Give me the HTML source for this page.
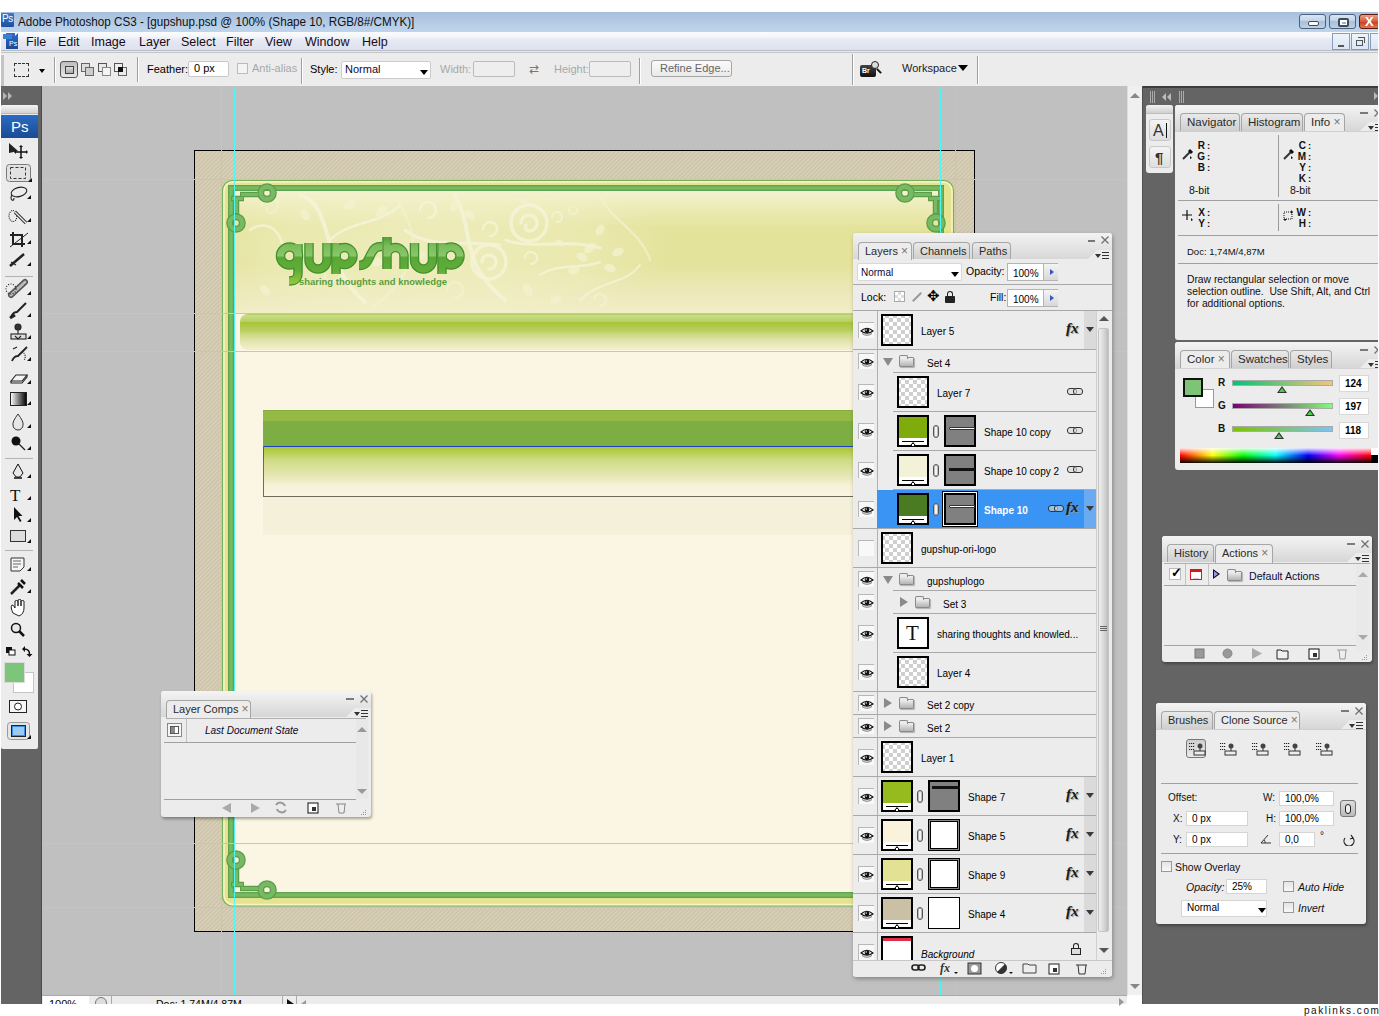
<!DOCTYPE html>
<html><head><meta charset="utf-8">
<style>
*{margin:0;padding:0;box-sizing:border-box}
html,body{width:1379px;height:1016px;overflow:hidden;background:#fff;font-family:"Liberation Sans",sans-serif;font-size:11px;color:#000}
.a{position:absolute}
#title{left:1px;top:12px;width:1378px;height:20px;background:linear-gradient(#a6bfdd,#b9cfe8 70%,#bfd4ec)}
#menu{left:1px;top:32px;width:1378px;height:18px;background:linear-gradient(#fbfcfe,#f6f7fb 22%,#e6e9f4 45%,#dde1ef)}
#menuline{left:1px;top:50px;width:1378px;height:3px;background:linear-gradient(#b9bcc8 0,#b9bcc8 1px,#e8e8ee 1px,#e8e8ee 2px,#c4c4c4 2px)}
#opts{left:1px;top:53px;width:1377px;height:33px;background:#ececec}
#work{left:0;top:86px;width:1127px;height:909px;background:#c0c0c0}
#tooldark{left:1px;top:86px;width:41px;height:918px;background:#646464}
#toolpanel{left:1px;top:105px;width:37px;height:643px;background:#ececec;border-radius:0 3px 3px 0}
#vscroll{left:1127px;top:86px;width:15px;height:909px;background:#f0f0f0}
#dock{left:1142px;top:86px;width:236px;height:918px;background:#646464;border-top:2px solid #3a3a3a;border-left:1px solid #4a4a4a}
#status{left:42px;top:995px;width:1085px;height:9px;background:#ececec}
.panel{position:absolute;background:#ececec;border-radius:3px}
#canvas{left:194px;top:150px;width:781px;height:782px;border:1px solid #000;background:#d0c7ae}
.wbtn{background:linear-gradient(#d9e5f3,#c3d4ea 45%,#a9bfdb 50%,#bcd0e8);border:1px solid #4e5f78;border-radius:3px}
.mi{top:3px;font-size:12.5px;line-height:15px;color:#1a0a14}
.mdi{top:1px;width:18px;height:17px;background:linear-gradient(#eef4fb,#d9e6f4);border:1px solid #8a9cb2}
.sep{position:absolute;width:2px;background:#a0a0a0;border-right:1px solid #fff}
.ob{position:absolute;font-size:11px;line-height:13px;white-space:nowrap}
.inp{position:absolute;background:#fff;border:1px solid #c8c8c8;border-radius:2px}
.eyeb{position:absolute;left:5px;width:16px;height:16px;background:#f8f8f8;border-top:1px solid #b8b8b8;border-left:1px solid #b8b8b8}
.thumb{position:absolute;width:32px;height:32px;border:2px solid #000;box-sizing:border-box}
.chk{background:conic-gradient(#cfcfcf 25%,#fff 0 50%,#cfcfcf 0 75%,#fff 0);background-size:8px 8px;background-position:2px 2px}
.chain{position:absolute;width:6px;height:13px;border:1.5px solid #555;border-radius:3px;background:#f4f4f4;box-shadow:inset 0 0 0 1px #bbb}
.link{position:absolute;width:15px;height:7px}.link::before,.link::after{content:"";position:absolute;top:0;width:8px;height:5px;border:1.5px solid #333;border-radius:3px;background:rgba(220,220,220,0.6)}.link::before{left:0}.link::after{left:6px}
.lname{position:absolute;font-size:10px;line-height:12px;white-space:nowrap}
.folder{position:absolute;width:15px;height:10px;margin-top:2px;background:linear-gradient(#f0f0f0,#b4b4b4);border:1px solid #8a8a8a;border-radius:0 1px 1px 1px;box-shadow:1px 1px 1px rgba(0,0,0,0.25)}.folder::before{content:"";position:absolute;left:-1px;top:-3px;width:7px;height:3px;background:#ececec;border:1px solid #8a8a8a;border-bottom:none;border-radius:2px 2px 0 0}
.fx{position:absolute;font-family:"Liberation Serif",serif;font-style:italic;font-weight:bold;font-size:15px;line-height:15px;text-shadow:1px 1px 1px #999}
.tab{position:absolute;height:17px;background:linear-gradient(#e9e9e9,#cfcfcf);border:1px solid #a5a5a5;border-bottom:none;border-radius:4px 4px 0 0;font-size:11px;line-height:16px;padding-left:6px;color:#2a2a2a;white-space:nowrap}
.tab.act{background:#ececec;height:18px}
.tx{color:#777;font-size:12px}
.ptx{position:absolute;font-size:12px;line-height:12px;color:#777}
.info{position:absolute;font-size:9.5px;line-height:11px;font-weight:bold;color:#111;white-space:nowrap}
.sl{width:101px;height:6px;border:1px solid #aaa}
.thm{position:absolute;width:0;height:0;border-left:5px solid transparent;border-right:5px solid transparent;border-bottom:7px solid #333}
.thm::after{content:"";position:absolute;left:-3px;top:2px;border-left:3px solid transparent;border-right:3px solid transparent;border-bottom:4px solid #4bd04b}
.inp2{position:absolute;width:30px;height:17px;background:#fff;border:1px solid #d8d8d8;font-size:10px;line-height:16px;padding-left:5px;font-weight:bold}
.inp3{position:absolute;height:15px;background:#fff;border:1px solid #d4d4d4;font-size:10px;line-height:14px;padding-left:5px;white-space:nowrap}
.cb{position:absolute;width:11px;height:11px;border:1px solid #999;background:linear-gradient(#e4e4e4,#f8f8f8)}
</style></head><body>
<div class="a" id="title">
<div class="a" style="left:0;top:1px;width:13px;height:14px;background:linear-gradient(#3a7bd0,#1c4f9e);border-radius:1px"></div>
<div class="a" style="left:1px;top:2px;color:#fff;font-size:10px;line-height:10px;letter-spacing:-0.5px">Ps</div>
<div class="a" style="left:17px;top:2px;font-size:13.5px;line-height:16px;color:#111;white-space:nowrap;transform:scaleX(0.864);transform-origin:0 0">Adobe Photoshop CS3 - [gupshup.psd @ 100% (Shape 10, RGB/8#/CMYK)]</div>
<div class="a wbtn" style="left:1298px;top:2px;width:27px;height:15px"><div class="a" style="left:8px;top:6px;width:11px;height:5px;background:#fff;border:1.5px solid #3f4a5a;border-radius:2px"></div></div>
<div class="a wbtn" style="left:1328px;top:2px;width:27px;height:15px"><div class="a" style="left:8px;top:3px;width:11px;height:9px;background:#fff;border:2px solid #3f4a5a;border-radius:2px"><div class="a" style="left:2px;top:2px;width:4px;height:2px;background:#9bb6d4"></div></div></div>
<div class="a" style="left:1358px;top:2px;width:22px;height:15px;background:linear-gradient(#e9a08a,#d45a3a 50%,#c8391b 51%,#dd7a52);border:1px solid #5a1a10;border-radius:3px;color:#fff;font-weight:bold;font-size:13px;line-height:13px;padding-left:5px">X</div>
</div>
<div class="a" id="menu">
<div class="a" style="left:2px;top:1px;width:17px;height:16px">
<div class="a" style="left:3px;top:0;width:12px;height:16px;background:linear-gradient(#2f6cc0,#1b4a94)"></div>
<div class="a" style="left:0;top:1px;width:9px;height:5px;background:#3b7fd6"></div>
<div class="a" style="left:12px;top:0;width:0;height:0;border-left:3px solid #fff;border-bottom:3px solid transparent"></div>
<div class="a" style="left:6px;top:7px;color:#fff;font-size:7px;line-height:7px">Ps</div>
</div>
<div class="a mi" style="left:25px">File</div>
<div class="a mi" style="left:57px">Edit</div>
<div class="a mi" style="left:90px">Image</div>
<div class="a mi" style="left:138px">Layer</div>
<div class="a mi" style="left:180px">Select</div>
<div class="a mi" style="left:225px">Filter</div>
<div class="a mi" style="left:264px">View</div>
<div class="a mi" style="left:304px">Window</div>
<div class="a mi" style="left:361px">Help</div>
<div class="a mdi" style="left:1331px"><div class="a" style="left:5px;top:11px;width:6px;height:2px;background:#555"></div></div>
<div class="a mdi" style="left:1350px"><div class="a" style="left:4px;top:6px;width:7px;height:6px;border:1.5px solid #555"></div><div class="a" style="left:6px;top:3px;width:7px;height:6px;border-top:1.5px solid #555;border-right:1.5px solid #555"></div></div>
<div class="a mdi" style="left:1369px"></div>
</div>

<div class="a" id="menuline"></div>
<div class="a" id="opts">
<div class="a" style="left:0;top:2px;width:3px;height:31px;background:#c4c4c4"></div>
<div class="a" style="left:13px;top:10px;width:15px;height:14px;border:1.5px dashed #333"></div>
<div class="a" style="left:38px;top:16px;border-left:3px solid transparent;border-right:3px solid transparent;border-top:4px solid #000"></div>
<div class="sep" style="left:53px;top:4px;height:26px"></div>
<div class="a" style="left:59px;top:8px;width:18px;height:17px;border:1px solid #555;border-radius:3px;background:linear-gradient(#bdbdbd,#e8e8e8)"><div class="a" style="left:4px;top:4px;width:9px;height:8px;border:1px solid #444;background:linear-gradient(#ddd,#aaa)"></div></div>
<div class="a" style="left:80px;top:10px;width:9px;height:9px;border:1px solid #666;background:#ddd"></div><div class="a" style="left:84px;top:14px;width:9px;height:9px;border:1px solid #666;background:#ccc"></div>
<div class="a" style="left:97px;top:10px;width:9px;height:9px;border:1px solid #555;background:#e8e8e8"></div><div class="a" style="left:101px;top:14px;width:9px;height:9px;border:1px solid #888;background:#f4f4f4"></div>
<div class="a" style="left:113px;top:10px;width:9px;height:9px;border:1px solid #555;background:#eee"></div><div class="a" style="left:117px;top:14px;width:9px;height:9px;border:1px solid #666;background:transparent"></div><div class="a" style="left:117px;top:14px;width:5px;height:5px;background:#111"></div>
<div class="sep" style="left:136px;top:4px;height:25px"></div>
<div class="ob" style="left:146px;top:9.5px">Feather:</div>
<div class="inp" style="left:187px;top:8px;width:41px;height:16px"><div class="ob" style="left:5px;top:0px">0 px</div></div>
<div class="a" style="left:236px;top:10px;width:11px;height:11px;border:1px solid #bbb;background:#f4f4f4"></div>
<div class="ob" style="left:251px;top:9px;color:#a8a8a8">Anti-alias</div>
<div class="sep" style="left:300px;top:5px;height:26px"></div>
<div class="ob" style="left:309px;top:9.5px">Style:</div>
<div class="inp" style="left:340px;top:8px;width:90px;height:18px;border-color:#ccc"><div class="ob" style="left:3px;top:1px;color:#0a0a3a">Normal</div><div class="a" style="left:78px;top:8px;border-left:4px solid transparent;border-right:4px solid transparent;border-top:5px solid #000"></div></div>
<div class="ob" style="left:439px;top:9.5px;color:#a8a8a8">Width:</div>
<div class="inp" style="left:472px;top:8px;width:42px;height:16px;background:#eee;border-color:#bbb"></div>
<div class="a" style="left:528px;top:10px;font-size:12px;color:#777;line-height:12px">&#8644;</div>
<div class="ob" style="left:553px;top:9.5px;color:#a8a8a8">Height:</div>
<div class="inp" style="left:588px;top:8px;width:42px;height:16px;background:#eee;border-color:#bbb"></div>
<div class="sep" style="left:638px;top:5px;height:26px"></div>
<div class="a" style="left:650px;top:7px;width:81px;height:17px;border:1px solid #a5a5a5;border-radius:3px;background:linear-gradient(#fafafa,#eaeaea)"><div class="ob" style="left:8px;top:1px;color:#666">Refine Edge...</div></div>
<div class="sep" style="left:851px;top:1px;height:31px"></div>
<div class="a" style="left:859px;top:12px;width:16px;height:12px;background:linear-gradient(#444,#111);border-radius:2px"><div class="a" style="left:2px;top:2px;color:#fff;font-size:7px;font-weight:bold;line-height:7px">Br</div></div>
<div class="a" style="left:870px;top:8px;width:8px;height:8px;border:1.5px solid #222;border-radius:50%;background:#ddd"></div>
<div class="a" style="left:877px;top:15px;width:2px;height:6px;background:#111;transform:rotate(-45deg)"></div>
<div class="ob" style="left:901px;top:9px;font-size:11px;color:#1a1a2a">Workspace</div>
<div class="a" style="left:957px;top:12px;border-left:5px solid transparent;border-right:5px solid transparent;border-top:6px solid #000"></div>
<div class="sep" style="left:976px;top:3px;height:28px"></div>
</div>
<div class="a" id="work"></div>
<svg class="a" style="left:194px;top:150px" width="782" height="783" viewBox="194 150 782 783">
<defs>
<pattern id="hatch" patternUnits="userSpaceOnUse" width="3" height="3" patternTransform="rotate(45)">
<rect width="3" height="3" fill="#cec5ab"/><rect width="1" height="3" fill="#dad2bd"/></pattern>
<clipPath id="hclip"><rect x="234" y="191" width="707" height="122"/></clipPath>
<linearGradient id="hdr" x1="0" y1="0" x2="0" y2="1">
<stop offset="0" stop-color="#f4f2d2"/><stop offset="0.1" stop-color="#eeedbc"/><stop offset="0.3" stop-color="#e4e39c"/><stop offset="0.6" stop-color="#e4e39c"/><stop offset="0.85" stop-color="#ede9bb"/><stop offset="1" stop-color="#f2edc6"/></linearGradient>
<radialGradient id="swl" cx="0.5" cy="0.5" r="0.5"><stop offset="0" stop-color="#f5f3d2" stop-opacity="0.6"/><stop offset="0.7" stop-color="#f3f1cc" stop-opacity="0.35"/><stop offset="1" stop-color="#f3f1cc" stop-opacity="0"/></radialGradient>
<linearGradient id="nav" x1="0" y1="0" x2="0" y2="1">
<stop offset="0" stop-color="#a5c55a"/><stop offset="0.04" stop-color="#cadd85"/><stop offset="0.21" stop-color="#b9cf66"/><stop offset="0.23" stop-color="#a7c636"/><stop offset="0.45" stop-color="#b8cd5e"/><stop offset="0.58" stop-color="#cedb86"/><stop offset="0.72" stop-color="#dfe3a6"/><stop offset="0.86" stop-color="#ebe9bd"/><stop offset="1" stop-color="#f5efcc"/></linearGradient>
<linearGradient id="cbox" x1="0" y1="0" x2="0" y2="1">
<stop offset="0" stop-color="#a8c632"/><stop offset="0.27" stop-color="#cfdc85"/><stop offset="0.57" stop-color="#e5e6b0"/><stop offset="0.78" stop-color="#f6f1d8"/><stop offset="1" stop-color="#fbf5e3"/></linearGradient>
<linearGradient id="logo" gradientUnits="userSpaceOnUse" x1="0" y1="237" x2="0" y2="282">
<stop offset="0" stop-color="#4f9f34"/><stop offset="0.2" stop-color="#7bbd5a"/><stop offset="0.42" stop-color="#8ac66a"/><stop offset="0.45" stop-color="#5aa737"/><stop offset="0.75" stop-color="#62ad38"/><stop offset="1" stop-color="#8ec53c"/></linearGradient>
</defs>
<rect x="194.5" y="150.5" width="780" height="781" fill="url(#hatch)" stroke="#000" stroke-width="1"/>
<rect x="222.5" y="180.5" width="731" height="725.5" rx="10" fill="#e4e38f" stroke="#74b35c" stroke-width="1.2"/>
<rect x="224" y="182" width="728" height="722.5" rx="9" fill="none" stroke="#f7f3c4" stroke-width="1.5"/>
<rect x="231" y="188" width="710" height="707" fill="#fbf5e3"/>
<rect x="234" y="191" width="707" height="122" fill="url(#hdr)"/>
<g clip-path="url(#hclip)"><ellipse cx="430" cy="250" rx="240" ry="90" fill="url(#swl)"/>
<g fill="none" stroke="#f5f3d6" stroke-opacity="0.85" stroke-width="3.5" stroke-linecap="round">
<circle cx="529" cy="223" r="18"/><path d="M529,223 m-8,0 a8,8 0 1 1 8,8 a4,4 0 0 1 -3,-6"/>
<circle cx="489" cy="262" r="17"/><path d="M489,262 m-7,0 a7,7 0 1 1 7,7"/>
<path d="M557,217 m-5,0 a5,5 0 1 1 5,5" stroke-width="2"/>
<path d="M490,229 m-7,0 a7,7 0 1 1 7,7" stroke-width="2.5"/>
<path d="M531,258 m-6,0 a6,6 0 1 1 6,6" stroke-width="2"/>
<path d="M428,210 m-8,0 a8,8 0 1 1 8,8" stroke-width="2.5"/>
<path d="M300,195 C335,205 318,262 365,302" stroke-width="4"/>
<path d="M455,195 C475,230 458,262 505,300" stroke-width="4"/>
<path d="M506,240 C530,250 570,238 600,248" stroke-width="3"/>
<path d="M405,230 C430,250 470,240 500,245" stroke-width="3"/>
<path d="M540,275 C560,262 580,270 600,262" stroke-width="2.5"/>
<path d="M330,240 C350,220 380,225 400,205" stroke-width="2.5"/>
<path d="M250,230 C270,215 290,240 280,260" stroke-width="2.5"/>
<path d="M580,300 C600,280 625,285 640,265" stroke-width="2"/>
</g>
<g fill="#f3f1cf" fill-opacity="0.75">
<ellipse cx="590" cy="248" rx="7" ry="4" transform="rotate(-40 590 248)"/><ellipse cx="582" cy="257" rx="6" ry="4" transform="rotate(30 582 257)"/>
<ellipse cx="574" cy="270" rx="6" ry="4" transform="rotate(-20 574 270)"/><ellipse cx="528" cy="290" rx="7" ry="4" transform="rotate(60 528 290)"/>
<ellipse cx="522" cy="200" rx="5" ry="3" transform="rotate(30 522 200)"/><ellipse cx="350" cy="205" rx="7" ry="4" transform="rotate(-30 350 205)"/>
<ellipse cx="382" cy="212" rx="7" ry="5" transform="rotate(-50 382 212)"/><ellipse cx="420" cy="255" rx="6" ry="4"/>
<ellipse cx="265" cy="290" rx="6" ry="4" transform="rotate(40 265 290)"/><ellipse cx="556" cy="300" rx="6" ry="4" transform="rotate(-30 556 300)"/>
<ellipse cx="610" cy="268" rx="6" ry="4" transform="rotate(20 610 268)"/><ellipse cx="305" cy="215" rx="6" ry="4" transform="rotate(60 305 215)"/>
<ellipse cx="455" cy="205" rx="7" ry="4" transform="rotate(-60 455 205)"/><ellipse cx="470" cy="215" rx="6" ry="4" transform="rotate(40 470 215)"/>
<ellipse cx="378" cy="262" rx="6" ry="4" transform="rotate(-30 378 262)"/><ellipse cx="600" cy="230" rx="6" ry="4" transform="rotate(-60 600 230)"/>
<ellipse cx="560" cy="243" rx="5" ry="3" transform="rotate(30 560 243)"/><ellipse cx="618" cy="252" rx="6" ry="4" transform="rotate(-30 618 252)"/>
</g>
<g fill="none" stroke="#f3f1cf" stroke-opacity="0.7" stroke-width="2.5" stroke-linecap="round">
<path d="M270,205 m-8,0 a8,8 0 1 1 8,8 a4,4 0 0 1 -3,-6"/>
<path d="M330,270 m-12,0 a12,12 0 1 1 12,12 a6,6 0 0 1 -5,-8"/>
<path d="M395,190 C400,210 420,230 410,260 C400,290 380,300 370,310"/>
<path d="M600,195 C610,220 640,230 650,260"/>
<path d="M455,290 m-8,0 a8,8 0 1 1 8,8"/>
<path d="M600,300 m-6,0 a6,6 0 1 1 6,6"/>
<circle cx="573" cy="210" r="4"/>
</g></g>
<rect x="240" y="314" width="701" height="36" rx="8" fill="url(#nav)"/>
<rect x="231" y="188" width="710" height="707" fill="none" stroke="#5fa34b" stroke-width="6"/><rect x="231" y="188" width="710" height="707" fill="none" stroke="#78b963" stroke-width="3.5"/>
<g id="ornd" fill="none" stroke="#5a9e47">
<circle cx="267" cy="193" r="6.3" stroke-width="7"/><circle cx="236" cy="223" r="6.3" stroke-width="7"/>
<path d="M240,194.5 H259 M231,198.5 H244 M236.5,198.5 V214" stroke-width="5.5"/>
</g>
<g id="orni" fill="none" stroke="#79b964">
<circle cx="267" cy="193" r="6.3" stroke-width="4.5"/><circle cx="236" cy="223" r="6.3" stroke-width="4.5"/>
<path d="M241,194.5 H258 M232,198.5 H243 M236.5,199.5 V213" stroke-width="3"/>
</g>
<use href="#ornd" transform="translate(1172,0) scale(-1,1)"/><use href="#orni" transform="translate(1172,0) scale(-1,1)"/>
<use href="#ornd" transform="translate(0,1083) scale(1,-1)"/><use href="#orni" transform="translate(0,1083) scale(1,-1)"/>
<use href="#ornd" transform="translate(1172,1083) scale(-1,-1)"/><use href="#orni" transform="translate(1172,1083) scale(-1,-1)"/>
<rect x="263" y="410" width="700" height="37" fill="#7dae44"/>
<rect x="263" y="410" width="700" height="11" fill="#94ba44"/><rect x="263" y="410" width="700" height="1" fill="#86ad40"/>
<rect x="263" y="447" width="700" height="49" fill="url(#cbox)"/>
<rect x="263" y="496" width="700" height="1" fill="#6e6c5c"/><rect x="263" y="446" width="1" height="51" fill="#6e6c5c"/>
<rect x="263" y="446" width="700" height="1" fill="#1c40c0"/><rect x="263" y="446" width="1" height="15" fill="#3c5ae0"/>
<rect x="263" y="497" width="700" height="38" fill="#f4f0da"/>
<g id="lgp" fill="none">
<circle cx="289.5" cy="256" r="9"/>
<path d="M298,244 V273 Q298,281 289,281"/>
<path d="M309,243 V260 A9,9 0 0 0 327,260 V243"/>
<path d="M336,243 V274"/>
<circle cx="344.5" cy="256" r="8.5"/>
<path d="M359,265.5 C367,265.5 368,260 371,254 C374,248 376,246.5 382,246.5"/>
<path d="M387,237 V269 M387,256 A8.5,8.5 0 0 1 404,256 V269"/>
<path d="M414.5,243 V260 A9,9 0 0 0 432.5,260 V243"/>
<path d="M442,243 V274"/>
<circle cx="451" cy="256" r="9"/>
</g>
<use href="#lgp" stroke="#3f8f2c" stroke-width="9.5"/>
<use href="#lgp" stroke="url(#logo)" stroke-width="7"/>
<text x="299" y="285" font-family="Liberation Sans" font-weight="bold" font-size="9.8" textLength="148" lengthAdjust="spacingAndGlyphs" fill="#5a9e3b">sharing thoughts and knowledge</text>
</svg>

<!--GUIDES--><div class="a" style="left:42px;top:179px;width:1085px;height:1px;background:#4ef6f6"></div>
<div class="a" style="left:42px;top:313px;width:1085px;height:1px;background:#4ef6f6"></div>
<div class="a" style="left:42px;top:351px;width:1085px;height:1px;background:#4ef6f6"></div>
<div class="a" style="left:42px;top:843px;width:1085px;height:1px;background:#4ef6f6"></div>
<div class="a" style="left:42px;top:907px;width:1085px;height:1px;background:#4ef6f6"></div>
<div class="a" style="left:221px;top:87px;width:1px;height:908px;background:#4ef6f6"></div>
<div class="a" style="left:234px;top:87px;width:1px;height:908px;background:#4ef6f6"></div>
<div class="a" style="left:940px;top:87px;width:1px;height:908px;background:#4ef6f6"></div>
<div class="a" style="left:955px;top:87px;width:1px;height:908px;background:#4ef6f6"></div><!--/GUIDES-->
<svg class="a" style="left:0;top:86px" width="42" height="918" viewBox="0 86 42 918" font-family="Liberation Sans">
<defs><linearGradient id="tbh" x1="0" y1="0" x2="0" y2="1"><stop offset="0" stop-color="#f4f4f4"/><stop offset="1" stop-color="#cfcfcf"/></linearGradient>
<linearGradient id="psb" x1="0" y1="0" x2="0" y2="1"><stop offset="0" stop-color="#2a6cc4"/><stop offset="1" stop-color="#1a4a94"/></linearGradient>
<linearGradient id="grd" x1="0" y1="0" x2="1" y2="0"><stop offset="0" stop-color="#fff"/><stop offset="1" stop-color="#000"/></linearGradient></defs>
<rect x="1" y="86" width="41" height="918" fill="#646464"/>
<rect x="41" y="86" width="1" height="918" fill="#4a4a4a"/>
<path d="M3,92 l4,4 l-4,4z M8,92 l4,4 l-4,4z" fill="#b5b5b5"/>
<rect x="1" y="105" width="37" height="644" rx="2" fill="#ececec"/>
<rect x="1" y="105" width="37" height="9" rx="2" fill="url(#tbh)"/>
<rect x="1" y="113" width="37" height="1" fill="#b8b8b8"/>
<rect x="1" y="115" width="37" height="23" fill="url(#psb)"/>
<text x="11" y="132" fill="#fff" font-size="15" font-weight="normal">Ps</text>
<g fill="#111" stroke="none">
<path d="M9,143 L9,153 L18,151 Z" fill="#222"/>
<path d="M21,147 v10 M16,152 h10" stroke="#111" stroke-width="1.5"/><path d="M19,147 l2,-2 l2,2z M19,157 l2,2 l2,-2z M16,150 l-2,2 l2,2z M26,150 l2,2 l-2,2z"/>
</g>
<rect x="6.5" y="164.5" width="24" height="17" rx="3" fill="#e2e2e2" stroke="#7a7a7a"/>
<rect x="10.5" y="167.5" width="15" height="11" fill="none" stroke="#333" stroke-dasharray="3,2"/>
<g fill="none" stroke="#222" stroke-width="1.1">
<ellipse cx="19" cy="192" rx="8" ry="4.5" transform="rotate(-15 19 192)"/><path d="M12,195 q-2,3 0,5 q2,1 2,-2"/>
<ellipse cx="13" cy="216" rx="4" ry="5.5" stroke-dasharray="1,1"/><path d="M15,212 l11,11" stroke="#333" stroke-width="3.2"/><path d="M15,212 l11,11" stroke="#eee" stroke-width="1.2"/>
<path d="M13,232 v12 h12 M10,235 h12 v12" stroke-width="2"/><path d="M10,247 l18,-14" stroke-width="1"/>
<path d="M10,266 l14,-12" stroke-width="2.5"/><path d="M11,262 l5,3" />
<line x1="5" y1="276.5" x2="33" y2="276.5" stroke="#b4b4b4"/>
<path d="M11,295 l14,-13" stroke="#555" stroke-width="6" stroke-linecap="round"/><path d="M11,295 l14,-13" stroke="#bbb" stroke-width="3" stroke-dasharray="1,2" stroke-linecap="round"/>
<circle cx="11" cy="289" r="5" stroke-dasharray="1,1.5"/>
<path d="M11,317 q2,-5 6,-5 l9,-9" stroke-width="2"/><path d="M10,318 l5,-3" stroke-width="3"/>
<circle cx="18" cy="327" r="3" fill="#333"/><path d="M18,330 v4"/><rect x="11" y="334" width="15" height="5" fill="#ddd"/><path d="M15,336 l3,3 l3,-3"/>
<path d="M12,361 q2,-5 6,-5 l9,-9" stroke-width="1.8"/><path d="M13,349 l4,-2" /><path d="M22,352 a5,5 0 0 1 2,8" stroke-dasharray="1,1"/>
<path d="M11,381 l5,-6 h11 l-5,6 z" fill="#f4f4f4"/><path d="M11,381 v2 h11 l5,-6 v-2"/>
</g>
<rect x="10.5" y="392.5" width="16" height="13" fill="url(#grd)" stroke="#222"/>
<path d="M18,414 q-6,8 -5,11 a5,5 0 0 0 10,0 q1,-3 -5,-11z" fill="#e6e6e6" stroke="#333"/>
<circle cx="16" cy="441" r="4.5" fill="#111"/><path d="M19,444 l6,6" stroke="#222" stroke-width="1.3"/>
<line x1="5" y1="458.5" x2="33" y2="458.5" stroke="#b4b4b4"/>
<path d="M18,464 l-5,9 l3,4 h4 l3,-4 z" fill="#e8e8e8" stroke="#111"/><path d="M14,478 h8" stroke="#111" stroke-width="1.5"/>
<text x="10" y="501" font-family="Liberation Serif" font-size="17" fill="#111">T</text>
<path d="M14,507 v13 l3,-3 l3,5 l1.5,-1 l-3,-5 h4 z" fill="#111"/>
<rect x="10.5" y="530.5" width="15" height="11" fill="#ddd" stroke="#333"/>
<line x1="5" y1="550.5" x2="33" y2="550.5" stroke="#b4b4b4"/>
<path d="M11,558 h13 v9 l-4,4 h-9 z" fill="#f5f5f5" stroke="#333"/><path d="M13,561 h8 M13,564 h8 M13,567 h5" stroke="#666"/>
<path d="M11,594 l9,-9" stroke="#222" stroke-width="2.5"/><path d="M18,583 l5,5 M21,580 l4,4" stroke="#111" stroke-width="2.5"/>
<path d="M13,613 q-3,-6 -1,-8 q2,0 3,3 v-7 q2,-1 3,0 v5 v-6 q2,-1 3,0 v6 v-5 q2,-1 3,0 v7 q0,6 -5,8z" fill="#fff" stroke="#222"/>
<circle cx="16" cy="628" r="4.5" fill="#e8e8e8" stroke="#111" stroke-width="1.5"/><path d="M19,631 l5,5" stroke="#111" stroke-width="2.5"/>
<rect x="6" y="647" width="6" height="6" fill="#111"/><rect x="9" y="650" width="6" height="5" fill="#fff" stroke="#111"/>
<path d="M24,649 q6,0 5.5,6" fill="none" stroke="#111" stroke-width="1.6"/><path d="M22,649 l3,-3 v6z M26.5,654 h6 l-3,3z" fill="#111"/>
<rect x="13.5" y="672.5" width="20" height="20" fill="#fff" stroke="#c4c4c4"/>
<rect x="4.5" y="662.5" width="20" height="20" fill="#7dc578" stroke="#dadada"/>
<rect x="9.5" y="700.5" width="17" height="12" fill="#f6f6f6" stroke="#222"/><circle cx="18" cy="706.5" r="3.5" fill="#fff" stroke="#222"/>
<rect x="7.5" y="722.5" width="22" height="17" rx="3" fill="#e4e4e4" stroke="#999"/>
<rect x="11.5" y="725.5" width="14" height="11" fill="#3d8fe0" stroke="#222"/><rect x="13" y="727" width="11" height="8" fill="#9cc9f5"/>
<g fill="#111"><path d="M27,199 l4,0 l0,-4z M27,222 l4,0 l0,-4z M27,244 l4,0 l0,-4z M27,266 l4,0 l0,-4z M27,295 l4,0 l0,-4z M27,317 l4,0 l0,-4z M27,339 l4,0 l0,-4z M27,361 l4,0 l0,-4z M27,384 l4,0 l0,-4z M27,405 l4,0 l0,-4z M27,428 l4,0 l0,-4z M27,450 l4,0 l0,-4z M27,478 l4,0 l0,-4z M27,500 l4,0 l0,-4z M27,522 l4,0 l0,-4z M27,543 l4,0 l0,-4z M27,571 l4,0 l0,-4z M27,593 l4,0 l0,-4z M27,739 l4,0 l0,-4z M28,182 l4,0 l0,-4z"/></g>
</svg>
<!--STATUS--><div class="a" style="left:42px;top:995px;width:1085px;height:9px;background:#ececec;border-top:1px solid #a8a8a8;overflow:hidden">
<div class="a" style="left:1px;top:0;width:46px;height:9px;background:#fff"></div>
<div class="a" style="left:7px;top:2px;font-size:11px;line-height:12px">100%</div>
<div class="a" style="left:53px;top:1px;width:12px;height:12px;border-radius:50%;border:1.5px solid #777;background:#ddd"></div>
<div class="a" style="left:69px;top:0;width:1px;height:9px;background:#aaa"></div>
<div class="a" style="left:114px;top:2px;font-size:10.5px;line-height:12px">Doc: 1,74M/4,87M</div>
<div class="a" style="left:240px;top:0;width:1px;height:9px;background:#aaa"></div>
<div class="a" style="left:245px;top:3px;border-top:5px solid transparent;border-bottom:5px solid transparent;border-left:7px solid #111"></div>
<div class="a" style="left:254px;top:0;width:1px;height:9px;background:#aaa"></div>
<div class="a" style="left:259px;top:4px;border-top:4px solid transparent;border-bottom:4px solid transparent;border-right:5px solid #999"></div>
</div>
<div class="a" style="left:1127px;top:86px;width:15px;height:909px;background:#f0f0f0;border-left:1px solid #dcdcdc"></div><div class="a" style="left:1127px;top:995px;width:15px;height:9px;background:#fff"></div>
<div class="a" style="left:1130px;top:93px;border-left:5px solid transparent;border-right:5px solid transparent;border-bottom:5px solid #888"></div>
<div class="a" style="left:1130px;top:984px;border-left:5px solid transparent;border-right:5px solid transparent;border-top:5px solid #888"></div>
<div class="a" style="left:1119px;top:998px;border-top:4px solid transparent;border-bottom:4px solid transparent;border-left:5px solid #999"></div>
<div class="a" style="left:1304px;top:1005px;font-family:'Liberation Sans',sans-serif;font-size:10px;line-height:12px;letter-spacing:1.55px;color:#111">paklinks.com</div><!--/STATUS-->


<!--LAYERS--><div class="panel" id="layers" style="left:853px;top:233px;width:259px;height:744px;box-shadow:1px 2px 4px rgba(0,0,0,0.3);overflow:hidden">
<div class="a" style="left:0;top:0;width:259px;height:26px;background:linear-gradient(#f2f2f2,#d8d8d8)"></div>
<div class="a" style="left:235px;top:17px;width:24px;height:9px;background:#ececec;clip-path:polygon(9px 0,100% 0,100% 100%,0 100%)"></div>
<div class="a" style="left:235px;top:7px;width:7px;height:2px;background:#777"></div>
<svg class="a" style="left:248px;top:3px" width="8" height="8" viewBox="0 0 8 8"><path d="M0.5,0.5 L7.5,7.5 M7.5,0.5 L0.5,7.5" stroke="#707070" stroke-width="1.3"/></svg>
<div class="a" style="left:242px;top:21px;border-left:3px solid transparent;border-right:3px solid transparent;border-top:4px solid #333"></div>
<div class="a" style="left:249px;top:19px;width:7px;height:7px;border-top:1px solid #333;border-bottom:1px solid #333"></div><div class="a" style="left:249px;top:22px;width:7px;height:1px;background:#333"></div>
<div class="tab act" style="left:5px;top:9px;width:54px">Layers <span class="tx">&#215;</span></div>
<div class="tab" style="left:60px;top:9px;width:57px">Channels</div>
<div class="tab" style="left:119px;top:9px;width:39px">Paths</div>
<div class="inp" style="left:4px;top:30px;width:105px;height:18px;border-color:#d8d8d8"><div class="ob" style="left:3px;top:2px;font-size:10px;color:#0a0a3a">Normal</div><div class="a" style="left:93px;top:8px;border-left:4px solid transparent;border-right:4px solid transparent;border-top:5px solid #000"></div></div>
<div class="ob" style="left:113px;top:32px;font-size:10.5px">Opacity:</div>
<div class="inp" style="left:154px;top:30px;width:51px;height:18px;border:1px solid #b4b4b4;border-radius:0"><div class="ob" style="left:5px;top:3px;font-size:10px">100%</div><div class="a" style="left:35px;top:0;width:15px;height:16px;border-left:1px solid #b4b4b4;background:linear-gradient(#f4f4f4,#d8d8d8)"><div class="a" style="left:6px;top:5px;border-top:3px solid transparent;border-bottom:3px solid transparent;border-left:4px solid #3455c8"></div></div></div>
<div class="a" style="left:0;top:51px;width:259px;height:1px;background:#a8a8a8"></div>
<div class="ob" style="left:8px;top:58px;font-size:10.5px">Lock:</div>
<div class="a" style="left:41px;top:58px;width:11px;height:11px;border:1px solid #aaa;background:conic-gradient(#ddd 25%,#fff 0 50%,#ddd 0 75%,#fff 0);background-size:6px 6px"></div>
<div class="a" style="left:58px;top:63px;width:12px;height:2px;background:#999;transform:rotate(-45deg)"></div>
<div class="ob" style="left:74px;top:55px;font-size:15px;line-height:15px">&#10021;</div>
<div class="a" style="left:92px;top:63px;width:10px;height:7px;background:#222;border-radius:1px"></div><div class="a" style="left:94px;top:58px;width:6px;height:7px;border:1.5px solid #222;border-bottom:none;border-radius:3px 3px 0 0"></div>
<div class="ob" style="left:137px;top:58px;font-size:10.5px">Fill:</div>
<div class="inp" style="left:154px;top:56px;width:51px;height:18px;border:1px solid #b4b4b4;border-radius:0"><div class="ob" style="left:5px;top:3px;font-size:10px">100%</div><div class="a" style="left:35px;top:0;width:15px;height:16px;border-left:1px solid #b4b4b4;background:linear-gradient(#f4f4f4,#d8d8d8)"><div class="a" style="left:6px;top:5px;border-top:3px solid transparent;border-bottom:3px solid transparent;border-left:4px solid #3455c8"></div></div></div>
<div class="a" style="left:0;top:77px;width:259px;height:1px;background:#a8a8a8"></div>
<div class="a" style="left:24px;top:78px;width:1px;height:649px;background:#b0b0b0"></div>
<div class="eyeb" style="top:89px"><svg width="14" height="10" viewBox="0 0 14 10" style="position:absolute;left:1px;top:3px"><path d="M1,5 Q7,-0.5 13,5 Q7,9.5 1,5z" fill="#fff" stroke="#111" stroke-width="1.1"/><circle cx="7" cy="4.8" r="2.4" fill="#111"/><circle cx="6.2" cy="4" r="0.7" fill="#fff"/><path d="M2,7.5 Q7,11 12,7.5" fill="none" stroke="#555" stroke-width="0.8"/></svg></div>
<div class="a" style="left:0px;top:116px;width:243px;height:1px;background:#a9a9a9"></div>
<div class="thumb chk" style="left:28px;top:81px"></div>
<div class="lname" style="left:68px;top:93px;color:#000;font-weight:normal;font-style:normal">Layer 5</div>
<div class="fx" style="left:213px;top:88px;color:#1a1a1a">fx</div>
<div class="a" style="left:231px;top:78px;width:12px;height:38px;background:#dadada"></div>
<div class="a" style="left:233px;top:94px;border-left:4px solid transparent;border-right:4px solid transparent;border-top:5px solid #3a3a3a"></div>
<div class="eyeb" style="top:120px"><svg width="14" height="10" viewBox="0 0 14 10" style="position:absolute;left:1px;top:3px"><path d="M1,5 Q7,-0.5 13,5 Q7,9.5 1,5z" fill="#fff" stroke="#111" stroke-width="1.1"/><circle cx="7" cy="4.8" r="2.4" fill="#111"/><circle cx="6.2" cy="4" r="0.7" fill="#fff"/><path d="M2,7.5 Q7,11 12,7.5" fill="none" stroke="#555" stroke-width="0.8"/></svg></div>
<div class="a" style="left:40px;top:139px;width:203px;height:1px;background:#a9a9a9"></div>
<div class="a" style="left:30px;top:125px;border-left:5px solid transparent;border-right:5px solid transparent;border-top:8px solid #8a8a8a"></div>
<div class="folder" style="left:46px;top:122px"></div>
<div class="lname" style="left:74px;top:125px">Set 4</div>
<div class="eyeb" style="top:151px"><svg width="14" height="10" viewBox="0 0 14 10" style="position:absolute;left:1px;top:3px"><path d="M1,5 Q7,-0.5 13,5 Q7,9.5 1,5z" fill="#fff" stroke="#111" stroke-width="1.1"/><circle cx="7" cy="4.8" r="2.4" fill="#111"/><circle cx="6.2" cy="4" r="0.7" fill="#fff"/><path d="M2,7.5 Q7,11 12,7.5" fill="none" stroke="#555" stroke-width="0.8"/></svg></div>
<div class="a" style="left:40px;top:178px;width:203px;height:1px;background:#a9a9a9"></div>
<div class="thumb chk" style="left:44px;top:143px"></div>
<div class="lname" style="left:84px;top:155px;color:#000;font-weight:normal;font-style:normal">Layer 7</div>
<div class="link" style="left:214px;top:155px"></div>
<div class="eyeb" style="top:190px"><svg width="14" height="10" viewBox="0 0 14 10" style="position:absolute;left:1px;top:3px"><path d="M1,5 Q7,-0.5 13,5 Q7,9.5 1,5z" fill="#fff" stroke="#111" stroke-width="1.1"/><circle cx="7" cy="4.8" r="2.4" fill="#111"/><circle cx="6.2" cy="4" r="0.7" fill="#fff"/><path d="M2,7.5 Q7,11 12,7.5" fill="none" stroke="#555" stroke-width="0.8"/></svg></div>
<div class="a" style="left:40px;top:217px;width:203px;height:1px;background:#a9a9a9"></div>
<div class="thumb" style="left:44px;top:182px;background:linear-gradient(#7fac0c 0,#7fac0c 21px,#fff 21px)"><div class="a" style="left:3px;top:24px;width:22px;height:1px;background:#000"></div><div class="a" style="left:10px;top:25px;border-left:4px solid transparent;border-right:4px solid transparent;border-bottom:5px solid #000"></div><div class="a" style="left:13px;top:27px;width:2px;height:2px;background:#fff"></div></div>
<div class="chain" style="left:80px;top:192px"></div>
<div class="thumb" style="left:91px;top:182px;background:#808080;">
<div class="a" style="left:3px;top:10px;width:26px;height:3px;background:#fff;border:1px solid #333;border-radius:1px"></div>
</div>
<div class="lname" style="left:131px;top:194px;color:#000;font-weight:normal;font-style:normal">Shape 10 copy</div>
<div class="link" style="left:214px;top:194px"></div>
<div class="eyeb" style="top:229px"><svg width="14" height="10" viewBox="0 0 14 10" style="position:absolute;left:1px;top:3px"><path d="M1,5 Q7,-0.5 13,5 Q7,9.5 1,5z" fill="#fff" stroke="#111" stroke-width="1.1"/><circle cx="7" cy="4.8" r="2.4" fill="#111"/><circle cx="6.2" cy="4" r="0.7" fill="#fff"/><path d="M2,7.5 Q7,11 12,7.5" fill="none" stroke="#555" stroke-width="0.8"/></svg></div>
<div class="a" style="left:40px;top:256px;width:203px;height:1px;background:#a9a9a9"></div>
<div class="thumb" style="left:44px;top:221px;background:linear-gradient(#f4f1d9 0,#f4f1d9 21px,#fff 21px)"><div class="a" style="left:3px;top:24px;width:22px;height:1px;background:#000"></div><div class="a" style="left:10px;top:25px;border-left:4px solid transparent;border-right:4px solid transparent;border-bottom:5px solid #000"></div><div class="a" style="left:13px;top:27px;width:2px;height:2px;background:#fff"></div></div>
<div class="chain" style="left:80px;top:231px"></div>
<div class="thumb" style="left:91px;top:221px;background:#808080;">
<div class="a" style="left:3px;top:12px;width:26px;height:3px;background:#111"></div>
</div>
<div class="lname" style="left:131px;top:233px;color:#000;font-weight:normal;font-style:normal">Shape 10 copy 2</div>
<div class="link" style="left:214px;top:233px"></div>
<div class="a" style="left:24px;top:257px;width:219px;height:39px;background:#3a94f3"></div>
<div class="eyeb" style="top:268px"><svg width="14" height="10" viewBox="0 0 14 10" style="position:absolute;left:1px;top:3px"><path d="M1,5 Q7,-0.5 13,5 Q7,9.5 1,5z" fill="#fff" stroke="#111" stroke-width="1.1"/><circle cx="7" cy="4.8" r="2.4" fill="#111"/><circle cx="6.2" cy="4" r="0.7" fill="#fff"/><path d="M2,7.5 Q7,11 12,7.5" fill="none" stroke="#555" stroke-width="0.8"/></svg></div>
<div class="a" style="left:0px;top:295px;width:243px;height:1px;background:#a9a9a9"></div>
<div class="thumb" style="left:44px;top:260px;background:linear-gradient(#4a7a22 0,#4a7a22 21px,#fff 21px)"><div class="a" style="left:3px;top:24px;width:22px;height:1px;background:#000"></div><div class="a" style="left:10px;top:25px;border-left:4px solid transparent;border-right:4px solid transparent;border-bottom:5px solid #000"></div><div class="a" style="left:13px;top:27px;width:2px;height:2px;background:#fff"></div></div>
<div class="chain" style="left:80px;top:270px"></div>
<div class="thumb" style="left:91px;top:260px;background:#808080;box-shadow:0 0 0 1px #fff, 0 0 0 2px #000;">
<div class="a" style="left:3px;top:10px;width:26px;height:3px;background:#fff;border:1px solid #333;border-radius:1px"></div>
</div>
<div class="lname" style="left:131px;top:272px;color:#fff;font-weight:bold;font-style:normal">Shape 10</div>
<div class="fx" style="left:213px;top:267px;color:#1a1a1a">fx</div>
<div class="a" style="left:231px;top:257px;width:12px;height:38px;background:#6aaaf0"></div>
<div class="a" style="left:233px;top:273px;border-left:4px solid transparent;border-right:4px solid transparent;border-top:5px solid #3a3a3a"></div>
<div class="link" style="left:195px;top:272px"></div>
<div class="eyeb" style="top:307px"></div>
<div class="a" style="left:0px;top:334px;width:243px;height:1px;background:#a9a9a9"></div>
<div class="thumb chk" style="left:28px;top:299px"></div>
<div class="lname" style="left:68px;top:311px;color:#000;font-weight:normal;font-style:normal">gupshup-ori-logo</div>
<div class="eyeb" style="top:338px"><svg width="14" height="10" viewBox="0 0 14 10" style="position:absolute;left:1px;top:3px"><path d="M1,5 Q7,-0.5 13,5 Q7,9.5 1,5z" fill="#fff" stroke="#111" stroke-width="1.1"/><circle cx="7" cy="4.8" r="2.4" fill="#111"/><circle cx="6.2" cy="4" r="0.7" fill="#fff"/><path d="M2,7.5 Q7,11 12,7.5" fill="none" stroke="#555" stroke-width="0.8"/></svg></div>
<div class="a" style="left:40px;top:357px;width:203px;height:1px;background:#a9a9a9"></div>
<div class="a" style="left:30px;top:343px;border-left:5px solid transparent;border-right:5px solid transparent;border-top:8px solid #8a8a8a"></div>
<div class="folder" style="left:46px;top:340px"></div>
<div class="lname" style="left:74px;top:343px">gupshuplogo</div>
<div class="eyeb" style="top:361px"><svg width="14" height="10" viewBox="0 0 14 10" style="position:absolute;left:1px;top:3px"><path d="M1,5 Q7,-0.5 13,5 Q7,9.5 1,5z" fill="#fff" stroke="#111" stroke-width="1.1"/><circle cx="7" cy="4.8" r="2.4" fill="#111"/><circle cx="6.2" cy="4" r="0.7" fill="#fff"/><path d="M2,7.5 Q7,11 12,7.5" fill="none" stroke="#555" stroke-width="0.8"/></svg></div>
<div class="a" style="left:40px;top:380px;width:203px;height:1px;background:#a9a9a9"></div>
<div class="a" style="left:47px;top:364px;border-top:5px solid transparent;border-bottom:5px solid transparent;border-left:8px solid #8a8a8a"></div>
<div class="folder" style="left:62px;top:363px"></div>
<div class="lname" style="left:90px;top:366px">Set 3</div>
<div class="eyeb" style="top:392px"><svg width="14" height="10" viewBox="0 0 14 10" style="position:absolute;left:1px;top:3px"><path d="M1,5 Q7,-0.5 13,5 Q7,9.5 1,5z" fill="#fff" stroke="#111" stroke-width="1.1"/><circle cx="7" cy="4.8" r="2.4" fill="#111"/><circle cx="6.2" cy="4" r="0.7" fill="#fff"/><path d="M2,7.5 Q7,11 12,7.5" fill="none" stroke="#555" stroke-width="0.8"/></svg></div>
<div class="a" style="left:40px;top:419px;width:203px;height:1px;background:#a9a9a9"></div>
<div class="thumb" style="left:44px;top:384px;background:#fff"><div class="a" style="left:7px;top:2px;font-family:'Liberation Serif',serif;font-size:21px;line-height:24px;color:#111">T</div></div>
<div class="lname" style="left:84px;top:396px;color:#000;font-weight:normal;font-style:normal">sharing thoughts and knowled...</div>
<div class="eyeb" style="top:431px"><svg width="14" height="10" viewBox="0 0 14 10" style="position:absolute;left:1px;top:3px"><path d="M1,5 Q7,-0.5 13,5 Q7,9.5 1,5z" fill="#fff" stroke="#111" stroke-width="1.1"/><circle cx="7" cy="4.8" r="2.4" fill="#111"/><circle cx="6.2" cy="4" r="0.7" fill="#fff"/><path d="M2,7.5 Q7,11 12,7.5" fill="none" stroke="#555" stroke-width="0.8"/></svg></div>
<div class="a" style="left:0px;top:458px;width:243px;height:1px;background:#a9a9a9"></div>
<div class="thumb chk" style="left:44px;top:423px"></div>
<div class="lname" style="left:84px;top:435px;color:#000;font-weight:normal;font-style:normal">Layer 4</div>
<div class="eyeb" style="top:462px"><svg width="14" height="10" viewBox="0 0 14 10" style="position:absolute;left:1px;top:3px"><path d="M1,5 Q7,-0.5 13,5 Q7,9.5 1,5z" fill="#fff" stroke="#111" stroke-width="1.1"/><circle cx="7" cy="4.8" r="2.4" fill="#111"/><circle cx="6.2" cy="4" r="0.7" fill="#fff"/><path d="M2,7.5 Q7,11 12,7.5" fill="none" stroke="#555" stroke-width="0.8"/></svg></div>
<div class="a" style="left:0px;top:481px;width:243px;height:1px;background:#a9a9a9"></div>
<div class="a" style="left:31px;top:465px;border-top:5px solid transparent;border-bottom:5px solid transparent;border-left:8px solid #8a8a8a"></div>
<div class="folder" style="left:46px;top:464px"></div>
<div class="lname" style="left:74px;top:467px">Set 2 copy</div>
<div class="eyeb" style="top:485px"><svg width="14" height="10" viewBox="0 0 14 10" style="position:absolute;left:1px;top:3px"><path d="M1,5 Q7,-0.5 13,5 Q7,9.5 1,5z" fill="#fff" stroke="#111" stroke-width="1.1"/><circle cx="7" cy="4.8" r="2.4" fill="#111"/><circle cx="6.2" cy="4" r="0.7" fill="#fff"/><path d="M2,7.5 Q7,11 12,7.5" fill="none" stroke="#555" stroke-width="0.8"/></svg></div>
<div class="a" style="left:0px;top:504px;width:243px;height:1px;background:#a9a9a9"></div>
<div class="a" style="left:31px;top:488px;border-top:5px solid transparent;border-bottom:5px solid transparent;border-left:8px solid #8a8a8a"></div>
<div class="folder" style="left:46px;top:487px"></div>
<div class="lname" style="left:74px;top:490px">Set 2</div>
<div class="eyeb" style="top:516px"><svg width="14" height="10" viewBox="0 0 14 10" style="position:absolute;left:1px;top:3px"><path d="M1,5 Q7,-0.5 13,5 Q7,9.5 1,5z" fill="#fff" stroke="#111" stroke-width="1.1"/><circle cx="7" cy="4.8" r="2.4" fill="#111"/><circle cx="6.2" cy="4" r="0.7" fill="#fff"/><path d="M2,7.5 Q7,11 12,7.5" fill="none" stroke="#555" stroke-width="0.8"/></svg></div>
<div class="a" style="left:0px;top:543px;width:243px;height:1px;background:#a9a9a9"></div>
<div class="thumb chk" style="left:28px;top:508px"></div>
<div class="lname" style="left:68px;top:520px;color:#000;font-weight:normal;font-style:normal">Layer 1</div>
<div class="eyeb" style="top:555px"><svg width="14" height="10" viewBox="0 0 14 10" style="position:absolute;left:1px;top:3px"><path d="M1,5 Q7,-0.5 13,5 Q7,9.5 1,5z" fill="#fff" stroke="#111" stroke-width="1.1"/><circle cx="7" cy="4.8" r="2.4" fill="#111"/><circle cx="6.2" cy="4" r="0.7" fill="#fff"/><path d="M2,7.5 Q7,11 12,7.5" fill="none" stroke="#555" stroke-width="0.8"/></svg></div>
<div class="a" style="left:0px;top:582px;width:243px;height:1px;background:#a9a9a9"></div>
<div class="thumb" style="left:28px;top:547px;background:linear-gradient(#95bb1f 0,#95bb1f 21px,#fff 21px)"><div class="a" style="left:3px;top:24px;width:22px;height:1px;background:#000"></div><div class="a" style="left:10px;top:25px;border-left:4px solid transparent;border-right:4px solid transparent;border-bottom:5px solid #000"></div><div class="a" style="left:13px;top:27px;width:2px;height:2px;background:#fff"></div></div>
<div class="chain" style="left:64px;top:557px"></div>
<div class="thumb" style="left:75px;top:547px;background:#808080;">
<div class="a" style="left:2px;top:4px;width:28px;height:3px;background:#111"></div>
</div>
<div class="lname" style="left:115px;top:559px;color:#000;font-weight:normal;font-style:normal">Shape 7</div>
<div class="fx" style="left:213px;top:554px;color:#1a1a1a">fx</div>
<div class="a" style="left:231px;top:544px;width:12px;height:38px;background:#dadada"></div>
<div class="a" style="left:233px;top:560px;border-left:4px solid transparent;border-right:4px solid transparent;border-top:5px solid #3a3a3a"></div>
<div class="eyeb" style="top:594px"><svg width="14" height="10" viewBox="0 0 14 10" style="position:absolute;left:1px;top:3px"><path d="M1,5 Q7,-0.5 13,5 Q7,9.5 1,5z" fill="#fff" stroke="#111" stroke-width="1.1"/><circle cx="7" cy="4.8" r="2.4" fill="#111"/><circle cx="6.2" cy="4" r="0.7" fill="#fff"/><path d="M2,7.5 Q7,11 12,7.5" fill="none" stroke="#555" stroke-width="0.8"/></svg></div>
<div class="a" style="left:0px;top:621px;width:243px;height:1px;background:#a9a9a9"></div>
<div class="thumb" style="left:28px;top:586px;background:linear-gradient(#faf3dc 0,#faf3dc 21px,#fff 21px)"><div class="a" style="left:3px;top:24px;width:22px;height:1px;background:#000"></div><div class="a" style="left:10px;top:25px;border-left:4px solid transparent;border-right:4px solid transparent;border-bottom:5px solid #000"></div><div class="a" style="left:13px;top:27px;width:2px;height:2px;background:#fff"></div></div>
<div class="chain" style="left:64px;top:596px"></div>
<div class="thumb" style="left:75px;top:586px;background:#fff;border:1px solid #000;box-shadow:inset 0 0 0 1px #888, inset 0 0 0 2px #000"></div>
<div class="lname" style="left:115px;top:598px;color:#000;font-weight:normal;font-style:normal">Shape 5</div>
<div class="fx" style="left:213px;top:593px;color:#1a1a1a">fx</div>
<div class="a" style="left:231px;top:583px;width:12px;height:38px;background:#dadada"></div>
<div class="a" style="left:233px;top:599px;border-left:4px solid transparent;border-right:4px solid transparent;border-top:5px solid #3a3a3a"></div>
<div class="eyeb" style="top:633px"><svg width="14" height="10" viewBox="0 0 14 10" style="position:absolute;left:1px;top:3px"><path d="M1,5 Q7,-0.5 13,5 Q7,9.5 1,5z" fill="#fff" stroke="#111" stroke-width="1.1"/><circle cx="7" cy="4.8" r="2.4" fill="#111"/><circle cx="6.2" cy="4" r="0.7" fill="#fff"/><path d="M2,7.5 Q7,11 12,7.5" fill="none" stroke="#555" stroke-width="0.8"/></svg></div>
<div class="a" style="left:0px;top:660px;width:243px;height:1px;background:#a9a9a9"></div>
<div class="thumb" style="left:28px;top:625px;background:linear-gradient(#e3e294 0,#e3e294 21px,#fff 21px)"><div class="a" style="left:3px;top:24px;width:22px;height:1px;background:#000"></div><div class="a" style="left:10px;top:25px;border-left:4px solid transparent;border-right:4px solid transparent;border-bottom:5px solid #000"></div><div class="a" style="left:13px;top:27px;width:2px;height:2px;background:#fff"></div></div>
<div class="chain" style="left:64px;top:635px"></div>
<div class="thumb" style="left:75px;top:625px;background:#fff;border:1px solid #000;box-shadow:inset 0 0 0 1px #888, inset 0 0 0 2px #000"></div>
<div class="lname" style="left:115px;top:637px;color:#000;font-weight:normal;font-style:normal">Shape 9</div>
<div class="fx" style="left:213px;top:632px;color:#1a1a1a">fx</div>
<div class="a" style="left:231px;top:622px;width:12px;height:38px;background:#dadada"></div>
<div class="a" style="left:233px;top:638px;border-left:4px solid transparent;border-right:4px solid transparent;border-top:5px solid #3a3a3a"></div>
<div class="eyeb" style="top:672px"><svg width="14" height="10" viewBox="0 0 14 10" style="position:absolute;left:1px;top:3px"><path d="M1,5 Q7,-0.5 13,5 Q7,9.5 1,5z" fill="#fff" stroke="#111" stroke-width="1.1"/><circle cx="7" cy="4.8" r="2.4" fill="#111"/><circle cx="6.2" cy="4" r="0.7" fill="#fff"/><path d="M2,7.5 Q7,11 12,7.5" fill="none" stroke="#555" stroke-width="0.8"/></svg></div>
<div class="a" style="left:0px;top:699px;width:243px;height:1px;background:#a9a9a9"></div>
<div class="thumb" style="left:28px;top:664px;background:linear-gradient(#cac0a6 0,#cac0a6 21px,#fff 21px)"><div class="a" style="left:3px;top:24px;width:22px;height:1px;background:#000"></div><div class="a" style="left:10px;top:25px;border-left:4px solid transparent;border-right:4px solid transparent;border-bottom:5px solid #000"></div><div class="a" style="left:13px;top:27px;width:2px;height:2px;background:#fff"></div></div>
<div class="chain" style="left:64px;top:674px"></div>
<div class="thumb" style="left:75px;top:664px;background:#fff;border-width:1px"></div>
<div class="lname" style="left:115px;top:676px;color:#000;font-weight:normal;font-style:normal">Shape 4</div>
<div class="fx" style="left:213px;top:671px;color:#1a1a1a">fx</div>
<div class="a" style="left:231px;top:661px;width:12px;height:38px;background:#dadada"></div>
<div class="a" style="left:233px;top:677px;border-left:4px solid transparent;border-right:4px solid transparent;border-top:5px solid #3a3a3a"></div>
<div class="eyeb" style="top:711px"><svg width="14" height="10" viewBox="0 0 14 10" style="position:absolute;left:1px;top:3px"><path d="M1,5 Q7,-0.5 13,5 Q7,9.5 1,5z" fill="#fff" stroke="#111" stroke-width="1.1"/><circle cx="7" cy="4.8" r="2.4" fill="#111"/><circle cx="6.2" cy="4" r="0.7" fill="#fff"/><path d="M2,7.5 Q7,11 12,7.5" fill="none" stroke="#555" stroke-width="0.8"/></svg></div>
<div class="a" style="left:0px;top:738px;width:243px;height:1px;background:#a9a9a9"></div>
<div class="thumb" style="left:28px;top:703px;height:30px;background:linear-gradient(#e03048 0,#e03048 3px,#fff 3px);border-bottom:none"></div>
<div class="lname" style="left:68px;top:716px;color:#000;font-weight:normal;font-style:italic">Background</div>
<div class="a" style="left:218px;top:715px;width:10px;height:7px;background:#ddd;border:1px solid #222"></div><div class="a" style="left:220px;top:710px;width:6px;height:6px;border:1.5px solid #222;border-bottom:none;border-radius:3px 3px 0 0"></div>
<div class="a" style="left:243px;top:78px;width:1px;height:649px;background:#d0d0d0"></div>
<div class="a" style="left:244px;top:78px;width:13px;height:649px;background:#ececec"></div>
<div class="a" style="left:246px;top:83px;border-left:5px solid transparent;border-right:5px solid transparent;border-bottom:5px solid #555"></div>
<div class="a" style="left:245px;top:95px;width:11px;height:604px;background:linear-gradient(90deg,#f0f0f0,#d4d4d4 60%,#bcbcbc);border:1px solid #c4c4c4;border-radius:2px"></div>
<div class="a" style="left:247px;top:393px;width:7px;height:1px;background:#666;box-shadow:0 2px 0 #666,0 4px 0 #666"></div>
<div class="a" style="left:246px;top:715px;border-left:5px solid transparent;border-right:5px solid transparent;border-top:5px solid #555"></div>
<div class="a" style="left:0;top:727px;width:259px;height:16px;background:#ececec;border-top:1px solid #c8c8c8"></div>
<svg class="a" style="left:0;top:727px" width="259" height="16" viewBox="0 0 259 16">
<g fill="none" stroke="#222" stroke-width="1.6"><rect x="59" y="5" width="7" height="5" rx="2.5"/><rect x="65" y="5" width="7" height="5" rx="2.5"/></g>
<text x="87" y="12" font-family="Liberation Serif" font-style="italic" font-weight="bold" font-size="12" fill="#333">fx</text><path d="M101,12 h4 l-2,2z" fill="#111"/>
<rect x="115" y="3" width="13" height="11" fill="#999" stroke="#333"/><circle cx="121.5" cy="8.5" r="3.5" fill="#fff"/>
<circle cx="148" cy="8" r="5.5" fill="#fff" stroke="#333"/><path d="M144,12 L152,4 A5.5,5.5 0 0 1 144,12z" fill="#333"/><path d="M156,12 h4 l-2,2z" fill="#111"/>
<path d="M170,4 h5 l1,1 h7 v8 h-13z" fill="#eee" stroke="#444"/>
<rect x="196" y="4" width="10" height="10" fill="#fff" stroke="#222"/><rect x="200" y="8" width="4" height="4" fill="#333"/>
<path d="M223,5 h11 M225,5 l1,9 h6 l1,-9" fill="#eee" stroke="#333"/>
<g fill="#999"><rect x="252" y="13" width="1" height="1"/><rect x="250" y="13" width="1" height="1"/><rect x="248" y="13" width="1" height="1"/><rect x="252" y="11" width="1" height="1"/><rect x="250" y="11" width="1" height="1"/><rect x="252" y="9" width="1" height="1"/></g>
</svg>
</div><!--/LAYERS-->






<!--PANELS--><div class="panel" style="left:161px;top:691px;width:210px;height:126px;box-shadow:1px 2px 3px rgba(0,0,0,0.35)">
<div class="a" style="left:0;top:0;width:210px;height:26px;background:linear-gradient(#f4f4f4,#d6d6d6);border-radius:3px 3px 0 0"></div>
<div class="a" style="left:185px;top:17px;width:25px;height:9px;background:#ececec;clip-path:polygon(9px 0,100% 0,100% 100%,0 100%)"></div>
<div class="a" style="left:185px;top:7px;width:8px;height:2px;background:#7a7a7a"></div>
<svg class="a" style="left:199px;top:4px" width="8" height="8" viewBox="0 0 8 8"><path d="M0.5,0.5 L7.5,7.5 M7.5,0.5 L0.5,7.5" stroke="#707070" stroke-width="1.3"/></svg>
<div class="a" style="left:193px;top:21px;border-left:3px solid transparent;border-right:3px solid transparent;border-top:4px solid #333"></div>
<div class="a" style="left:200px;top:19px;width:7px;height:7px;border-top:1px solid #333;border-bottom:1px solid #333"></div><div class="a" style="left:200px;top:22px;width:7px;height:1px;background:#333"></div>
<div class="tab act" style="left:5px;top:9px;width:85px;height:18px;font-size:11px">Layer Comps <span class="tx">&#215;</span></div>
<div class="a" style="left:5px;top:27px;width:200px;height:1px;background:#b0b0b0"></div>
<div class="a" style="left:6px;top:32px;width:15px;height:14px;border:1px solid #888;background:#f4f4f4"><div class="a" style="left:2px;top:2px;width:9px;height:8px;border:1px solid #555;background:linear-gradient(90deg,#888 0 4px,#fff 4px)"></div></div>
<div class="a" style="left:25px;top:28px;width:1px;height:23px;background:#c0c0c0"></div>
<div class="lname" style="left:44px;top:34px;font-style:italic;font-size:10px;color:#0a0a2a">Last Document State</div>
<div class="a" style="left:3px;top:51px;width:192px;height:1px;background:#a0a0a0"></div>
<div class="a" style="left:195px;top:28px;width:12px;height:80px;background:#e8e8e8"></div>
<div class="a" style="left:196px;top:36px;border-left:5px solid transparent;border-right:5px solid transparent;border-bottom:5px solid #999"></div>
<div class="a" style="left:196px;top:98px;border-left:5px solid transparent;border-right:5px solid transparent;border-top:5px solid #999"></div>
<div class="a" style="left:3px;top:108px;width:192px;height:1px;background:#a0a0a0"></div>
<svg class="a" style="left:0;top:109px" width="210" height="17" viewBox="0 0 210 17">
<path d="M61,8 l9,-5 v10z" fill="#aaa"/><path d="M90,3 v10 l9,-5z" fill="#aaa"/>
<path d="M115,5 a5,5 0 0 1 9,1 M125,10 a5,5 0 0 1 -9,-1" fill="none" stroke="#999" stroke-width="2"/>
<rect x="147" y="3" width="10" height="10" fill="#fff" stroke="#111"/><rect x="151" y="7" width="4" height="4" fill="#333"/>
<path d="M175,4 h10 M177,4 l1,9 h5 l1,-9" fill="#eee" stroke="#888"/>
<g fill="#999"><rect x="204" y="14" width="1" height="1"/><rect x="202" y="14" width="1" height="1"/><rect x="200" y="14" width="1" height="1"/><rect x="204" y="12" width="1" height="1"/><rect x="202" y="12" width="1" height="1"/><rect x="204" y="10" width="1" height="1"/></g>
</svg>
</div>
<div class="a" style="left:1142px;top:86px;width:237px;height:918px;background:#646464"></div>
<div class="a" style="left:1142px;top:86px;width:237px;height:2px;background:#3c3c3c"></div>
<div class="a" style="left:1142px;top:86px;width:1px;height:918px;background:#505050"></div>
<div class="a" style="left:1150px;top:91px;width:1px;height:12px;background:#aaa;box-shadow:2px 0 0 #aaa,4px 0 0 #aaa"></div>
<div class="a" style="left:1162px;top:93px;border-top:4px solid transparent;border-bottom:4px solid transparent;border-right:4px solid #bbb"></div>
<div class="a" style="left:1167px;top:93px;border-top:4px solid transparent;border-bottom:4px solid transparent;border-right:4px solid #bbb"></div>
<div class="a" style="left:1179px;top:91px;width:1px;height:12px;background:#aaa;box-shadow:2px 0 0 #aaa,4px 0 0 #aaa"></div>
<div class="a" style="left:1374px;top:92px;border-top:4px solid transparent;border-bottom:4px solid transparent;border-left:4px solid #bbb"></div>
<div class="panel" style="left:1146px;top:105px;width:27px;height:68px;border-radius:3px">
<div class="a" style="left:0;top:0;width:27px;height:9px;background:linear-gradient(#f2f2f2,#cfcfcf);border-radius:3px 3px 0 0;border-bottom:1px solid #bdbdbd"></div>
<div class="a" style="left:3px;top:14px;width:22px;height:22px;border:1px solid #c8c8c8;border-radius:3px;background:linear-gradient(#f4f4f4,#dedede)"><div class="a" style="left:3px;top:2px;font-size:16px;line-height:18px;color:#333">A</div><div class="a" style="left:16px;top:3px;width:1px;height:15px;background:#111"></div></div>
<div class="a" style="left:3px;top:41px;width:22px;height:22px;border:1px solid #c8c8c8;border-radius:3px;background:linear-gradient(#f4f4f4,#dedede)"><div class="a" style="left:5px;top:2px;font-size:15px;line-height:18px;color:#333;font-weight:bold">&#182;</div></div>
</div>
<div class="panel" style="left:1175px;top:105px;width:210px;height:235px;border-radius:3px 0 0 3px">
<div class="a" style="left:0;top:0;width:210px;height:26px;background:linear-gradient(#f4f4f4,#d6d6d6);border-radius:3px 3px 0 0"></div>
<div class="a" style="left:185px;top:17px;width:25px;height:9px;background:#ececec;clip-path:polygon(9px 0,100% 0,100% 100%,0 100%)"></div>
<div class="a" style="left:185px;top:7px;width:8px;height:2px;background:#7a7a7a"></div>
<svg class="a" style="left:199px;top:4px" width="8" height="8" viewBox="0 0 8 8"><path d="M0.5,0.5 L7.5,7.5 M7.5,0.5 L0.5,7.5" stroke="#707070" stroke-width="1.3"/></svg>
<div class="a" style="left:193px;top:21px;border-left:3px solid transparent;border-right:3px solid transparent;border-top:4px solid #333"></div>
<div class="a" style="left:200px;top:19px;width:7px;height:7px;border-top:1px solid #333;border-bottom:1px solid #333"></div><div class="a" style="left:200px;top:22px;width:7px;height:1px;background:#333"></div>
<div class="tab" style="left:5px;top:8px;width:60px;height:18px;font-size:11.5px">Navigator</div>
<div class="tab" style="left:66px;top:8px;width:62px;height:18px;font-size:11.5px">Histogram</div>
<div class="tab act" style="left:129px;top:8px;width:41px;height:19px;font-size:11.5px">Info <span class="tx">&#215;</span></div>
<div class="a" style="left:0;top:26px;width:204px;height:1px;background:#d0d0d0"></div>
<div class="info" style="left:18px;top:35px;text-align:right;width:12px;font-size:10px">R<br>G<br>B</div><div class="info" style="left:32px;top:35px">:<br>:<br>:</div>
<div class="info" style="left:14px;top:80px;font-weight:normal;font-size:10.5px">8-bit</div>
<div class="info" style="left:118px;top:35px;text-align:right;width:13px;font-size:10px">C<br>M<br>Y<br>K</div><div class="info" style="left:133px;top:35px">:<br>:<br>:<br>:</div>
<div class="info" style="left:115px;top:80px;font-weight:normal;font-size:10.5px">8-bit</div>
<div class="a" style="left:103px;top:30px;width:1px;height:62px;background:#9a9a9a"></div>
<div class="a" style="left:3px;top:95px;width:201px;height:1px;background:#a0a0a0"></div>
<div class="info" style="left:18px;top:102px;text-align:right;width:12px;font-size:10px">X<br>Y</div><div class="info" style="left:32px;top:102px">:<br>:</div>
<div class="info" style="left:117px;top:102px;text-align:right;width:14px;font-size:10px">W<br>H</div><div class="info" style="left:133px;top:102px">:<br>:</div>
<div class="a" style="left:103px;top:99px;width:1px;height:27px;background:#9a9a9a"></div>
<div class="a" style="left:3px;top:130px;width:201px;height:1px;background:#a0a0a0"></div>
<div class="info" style="left:12px;top:141px;font-weight:normal">Doc: 1,74M/4,87M</div>
<div class="a" style="left:3px;top:158px;width:201px;height:1px;background:#a0a0a0"></div>
<div class="info" style="left:12px;top:169px;font-weight:normal;line-height:11.8px;font-size:10.3px">Draw rectangular selection or move<br>selection outline.&nbsp; Use Shift, Alt, and Ctrl<br>for additional options.</div>
<svg class="a" style="left:6px;top:42px" width="14" height="14" viewBox="0 0 14 14"><path d="M2,12 l7,-7" stroke="#333" stroke-width="2"/><path d="M8,3 l3,3" stroke="#111" stroke-width="3"/><path d="M9,9 l2,2 l-2,1z" fill="#111"/></svg>
<svg class="a" style="left:107px;top:42px" width="14" height="14" viewBox="0 0 14 14"><path d="M2,12 l7,-7" stroke="#333" stroke-width="2"/><path d="M8,3 l3,3" stroke="#111" stroke-width="3"/><path d="M9,9 l2,2 l-2,1z" fill="#111"/></svg>
<svg class="a" style="left:6px;top:103px" width="14" height="14" viewBox="0 0 14 14"><path d="M6,2 v10 M1,7 h10" stroke="#111" stroke-width="1.2"/><path d="M10,10 l2,2 l-2,1z" fill="#111"/></svg>
<svg class="a" style="left:107px;top:103px" width="14" height="14" viewBox="0 0 14 14"><path d="M2,4 h8 v7 h-8z" fill="none" stroke="#111" stroke-dasharray="1,1"/><path d="M9,2 l2,2 l-2,2z M1,11 l2,2 l2,-2z" fill="#111"/></svg>
</div><div class="panel" style="left:1175px;top:342px;width:210px;height:128px;border-radius:3px 0 0 3px">
<div class="a" style="left:0;top:0;width:210px;height:26px;background:linear-gradient(#f4f4f4,#d6d6d6);border-radius:3px 3px 0 0"></div>
<div class="a" style="left:185px;top:17px;width:25px;height:9px;background:#ececec;clip-path:polygon(9px 0,100% 0,100% 100%,0 100%)"></div>
<div class="a" style="left:185px;top:7px;width:8px;height:2px;background:#7a7a7a"></div>
<svg class="a" style="left:199px;top:4px" width="8" height="8" viewBox="0 0 8 8"><path d="M0.5,0.5 L7.5,7.5 M7.5,0.5 L0.5,7.5" stroke="#707070" stroke-width="1.3"/></svg>
<div class="a" style="left:193px;top:21px;border-left:3px solid transparent;border-right:3px solid transparent;border-top:4px solid #333"></div>
<div class="a" style="left:200px;top:19px;width:7px;height:7px;border-top:1px solid #333;border-bottom:1px solid #333"></div><div class="a" style="left:200px;top:22px;width:7px;height:1px;background:#333"></div>
<div class="tab act" style="left:5px;top:8px;width:50px;height:19px;font-size:11.5px">Color <span class="tx">&#215;</span></div>
<div class="tab" style="left:56px;top:8px;width:58px;height:18px;font-size:11.5px">Swatches</div>
<div class="tab" style="left:115px;top:8px;width:42px;height:18px;font-size:11.5px">Styles</div>
<div class="a" style="left:0;top:26px;width:204px;height:1px;background:#d4d4d4"></div>
<div class="a" style="left:20px;top:47px;width:19px;height:19px;background:#fff;border:1px solid #999"></div>
<div class="a" style="left:8px;top:36px;width:20px;height:19px;background:#7dc476;border:2px solid #111"></div>
<div class="info" style="left:43px;top:35px;font-size:10px">R</div>
<div class="info" style="left:43px;top:58px;font-size:10px">G</div>
<div class="info" style="left:43px;top:81px;font-size:10px">B</div>
<div class="a sl" style="left:57px;top:38px;background:linear-gradient(90deg,#00c47a,#7ec476 50%,#f7c476)"></div>
<div class="a sl" style="left:57px;top:61px;background:linear-gradient(90deg,#7c0076,#7c7e76 50%,#7cff76)"></div>
<div class="a sl" style="left:57px;top:84px;background:linear-gradient(90deg,#7cc400,#7cc476 50%,#7cc4f6)"></div>
<div class="thm" style="left:102px;top:44px"></div><div class="thm" style="left:130px;top:67px"></div><div class="thm" style="left:99px;top:90px"></div>
<div class="inp2" style="left:164px;top:33px">124</div>
<div class="inp2" style="left:164px;top:56px">197</div>
<div class="inp2" style="left:164px;top:80px">118</div>
<div class="a" style="left:5px;top:106px;width:191px;height:15px;background:linear-gradient(rgba(255,255,255,0.9),rgba(255,255,255,0) 50%,rgba(0,0,0,0) 50%,rgba(0,0,0,0.95)),linear-gradient(90deg,#f00,#ff0 17%,#0f0 33%,#0ff 50%,#00f 67%,#f0f 83%,#f00)"></div>
<div class="a" style="left:196px;top:106px;width:8px;height:7px;background:#fff"></div><div class="a" style="left:196px;top:113px;width:8px;height:8px;background:#000"></div>
</div><div class="panel" style="left:1162px;top:536px;width:210px;height:126px;box-shadow:1px 2px 3px rgba(0,0,0,0.3)">
<div class="a" style="left:0;top:0;width:210px;height:26px;background:linear-gradient(#f4f4f4,#d6d6d6);border-radius:3px 3px 0 0"></div>
<div class="a" style="left:185px;top:17px;width:25px;height:9px;background:#ececec;clip-path:polygon(9px 0,100% 0,100% 100%,0 100%)"></div>
<div class="a" style="left:185px;top:7px;width:8px;height:2px;background:#7a7a7a"></div>
<svg class="a" style="left:199px;top:4px" width="8" height="8" viewBox="0 0 8 8"><path d="M0.5,0.5 L7.5,7.5 M7.5,0.5 L0.5,7.5" stroke="#707070" stroke-width="1.3"/></svg>
<div class="a" style="left:193px;top:21px;border-left:3px solid transparent;border-right:3px solid transparent;border-top:4px solid #333"></div>
<div class="a" style="left:200px;top:19px;width:7px;height:7px;border-top:1px solid #333;border-bottom:1px solid #333"></div><div class="a" style="left:200px;top:22px;width:7px;height:1px;background:#333"></div>
<div class="tab" style="left:5px;top:8px;width:47px;height:18px;font-size:11px">History</div>
<div class="tab act" style="left:53px;top:8px;width:58px;height:19px;font-size:11px">Actions <span class="tx">&#215;</span></div>
<div class="a" style="left:2px;top:27px;width:206px;height:1px;background:#b0b0b0"></div>
<div class="a" style="left:7px;top:32px;width:12px;height:12px;background:#fff;border:1px solid #bbb"><div class="a" style="left:1px;top:-3px;font-size:13px;line-height:14px;font-weight:bold">&#10003;</div></div>
<div class="a" style="left:23px;top:28px;width:1px;height:21px;background:#c4c4c4"></div>
<div class="a" style="left:28px;top:33px;width:12px;height:11px;background:#fff;border:1.5px solid #d81818;border-top-width:3px"><div class="a" style="left:2px;top:1px;font-size:7px;line-height:7px;color:#d81818">...</div></div>
<div class="a" style="left:46px;top:28px;width:1px;height:21px;background:#c4c4c4"></div>
<div class="a" style="left:51px;top:33px;border-top:5px solid transparent;border-bottom:5px solid transparent;border-left:7px solid #111"></div><div class="a" style="left:52px;top:35px;border-top:3px solid transparent;border-bottom:3px solid transparent;border-left:4px solid #9a9af0"></div>
<div class="folder" style="left:65px;top:33px"></div>
<div class="lname" style="left:87px;top:34px;font-size:10.6px;color:#0a0a3a">Default Actions</div>
<div class="a" style="left:2px;top:49px;width:192px;height:1px;background:#a4a4a4"></div>
<div class="a" style="left:194px;top:28px;width:13px;height:86px;background:#e9e9e9"></div>
<div class="a" style="left:196px;top:36px;border-left:5px solid transparent;border-right:5px solid transparent;border-bottom:5px solid #aaa"></div>
<div class="a" style="left:196px;top:99px;border-left:5px solid transparent;border-right:5px solid transparent;border-top:5px solid #aaa"></div>
<div class="a" style="left:2px;top:109px;width:192px;height:1px;background:#a4a4a4"></div>
<svg class="a" style="left:0;top:110px" width="210" height="16" viewBox="0 0 210 16">
<rect x="33" y="3" width="9" height="9" fill="#999" stroke="#777"/><circle cx="65.5" cy="7.5" r="4.5" fill="#999" stroke="#888"/>
<path d="M90,2 v11 l10,-5.5z" fill="#aaa"/><path d="M115,4 h4 l1,1 h6 v8 h-11z" fill="#f0f0f0" stroke="#222"/>
<rect x="147" y="3" width="10" height="10" fill="#fff" stroke="#111"/><rect x="151" y="7" width="4" height="4" fill="#333"/>
<path d="M175,4 h10 M177,4 l1,9 h5 l1,-9" fill="#eee" stroke="#999"/>
<g fill="#999"><rect x="204" y="13" width="1" height="1"/><rect x="202" y="13" width="1" height="1"/><rect x="200" y="13" width="1" height="1"/><rect x="204" y="11" width="1" height="1"/><rect x="202" y="11" width="1" height="1"/><rect x="204" y="9" width="1" height="1"/></g>
</svg>
</div><div class="panel" style="left:1156px;top:703px;width:210px;height:221px;box-shadow:1px 2px 3px rgba(0,0,0,0.3)">
<div class="a" style="left:0;top:0;width:210px;height:26px;background:linear-gradient(#f4f4f4,#d6d6d6);border-radius:3px 3px 0 0"></div>
<div class="a" style="left:185px;top:17px;width:25px;height:9px;background:#ececec;clip-path:polygon(9px 0,100% 0,100% 100%,0 100%)"></div>
<div class="a" style="left:185px;top:7px;width:8px;height:2px;background:#7a7a7a"></div>
<svg class="a" style="left:199px;top:4px" width="8" height="8" viewBox="0 0 8 8"><path d="M0.5,0.5 L7.5,7.5 M7.5,0.5 L0.5,7.5" stroke="#707070" stroke-width="1.3"/></svg>
<div class="a" style="left:193px;top:21px;border-left:3px solid transparent;border-right:3px solid transparent;border-top:4px solid #333"></div>
<div class="a" style="left:200px;top:19px;width:7px;height:7px;border-top:1px solid #333;border-bottom:1px solid #333"></div><div class="a" style="left:200px;top:22px;width:7px;height:1px;background:#333"></div>
<div class="tab" style="left:5px;top:8px;width:52px;height:18px;font-size:11px">Brushes</div>
<div class="tab act" style="left:58px;top:8px;width:86px;height:19px;font-size:11px">Clone Source <span class="tx">&#215;</span></div>
<div class="a" style="left:0;top:26px;width:210px;height:1px;background:#d0d0d0"></div>
<div class="a" style="left:30px;top:36px;width:20px;height:19px;border:1px solid #777;border-radius:3px;background:linear-gradient(#cfcfcf,#eaeaea)"></div>
<svg class="a" style="left:0;top:36px" width="210" height="20" viewBox="0 0 210 20">
<g id="cs1"><path d="M33,4.5 h6 M33,7.5 h6 M33,10.5 h6" stroke="#222" stroke-width="1.2" stroke-dasharray="1.2,0.8"/><circle cx="44" cy="7" r="2.5" fill="#444"/><path d="M44,9 v3" stroke="#333"/><rect x="38" y="12" width="11" height="4" fill="#eee" stroke="#333"/></g>
<use href="#cs1" x="31"/><use href="#cs1" x="63"/><use href="#cs1" x="95"/><use href="#cs1" x="127"/>
</svg>
<div class="a" style="left:5px;top:80px;width:197px;height:1px;background:#a0a0a0"></div>
<div class="info" style="left:12px;top:89px;font-weight:normal;font-size:10px">Offset:</div>
<div class="info" style="left:107px;top:89px;font-weight:normal;font-size:10px">W:</div>
<div class="inp3" style="left:123px;top:88px;width:55px">100,0%</div>
<div class="info" style="left:17px;top:110px;font-weight:normal;font-size:10px">X:</div>
<div class="inp3" style="left:30px;top:108px;width:62px">0 px</div>
<div class="info" style="left:110px;top:110px;font-weight:normal;font-size:10px">H:</div>
<div class="inp3" style="left:123px;top:108px;width:55px">100,0%</div>
<div class="info" style="left:17px;top:131px;font-weight:normal;font-size:10px">Y:</div>
<div class="inp3" style="left:30px;top:129px;width:62px">0 px</div>
<svg class="a" style="left:104px;top:131px" width="12" height="10" viewBox="0 0 12 10"><path d="M1,9 h10 M1,9 l7,-8 M5,9 a3,3 0 0 0 -1,-3" fill="none" stroke="#333"/></svg>
<div class="inp3" style="left:123px;top:129px;width:36px">0,0</div>
<div class="info" style="left:164px;top:127px;font-weight:normal;font-size:10px">&#176;</div>
<div class="a" style="left:188px;top:103px;width:9px;height:4px;border-top:1px solid #333;border-right:1px solid #333"></div>
<div class="a" style="left:184px;top:97px;width:16px;height:17px;border:1px solid #777;border-radius:3px;background:linear-gradient(#ddd,#bbb)"><div class="a" style="left:4px;top:3px;width:6px;height:10px;border:1.5px solid #222;border-radius:3px;background:#eee"></div></div>
<svg class="a" style="left:186px;top:129px" width="14" height="14" viewBox="0 0 14 14"><path d="M3,6 a5,5 0 1 0 8,0 M9,3 l2,3 l-3,1" fill="none" stroke="#222" stroke-width="1.2"/></svg>
<div class="a" style="left:5px;top:150px;width:197px;height:1px;background:#a0a0a0"></div>
<div class="cb" style="left:5px;top:158px"></div>
<div class="info" style="left:19px;top:159px;font-weight:normal;font-size:10.5px">Show Overlay</div>
<div class="info" style="left:30px;top:179px;font-weight:normal;font-style:italic;font-size:10.5px">Opacity:</div>
<div class="inp3" style="left:70px;top:176px;width:41px">25%</div>
<div class="cb" style="left:127px;top:178px"></div><div class="info" style="left:142px;top:179px;font-weight:normal;font-style:italic;font-size:10.5px">Auto Hide</div>
<div class="inp3" style="left:25px;top:197px;width:86px;height:17px">Normal<div class="a" style="left:76px;top:7px;border-left:4px solid transparent;border-right:4px solid transparent;border-top:5px solid #000"></div></div>
<div class="cb" style="left:127px;top:199px"></div><div class="info" style="left:142px;top:200px;font-weight:normal;font-style:italic;font-size:10.5px">Invert</div>
</div><!--/PANELS-->
<!--EDGES--><div class="a" style="left:1378px;top:0;width:1px;height:1004px;background:#fff"></div><div class="a" style="left:0;top:0;width:1px;height:1004px;background:#fff"></div>
</body></html>
